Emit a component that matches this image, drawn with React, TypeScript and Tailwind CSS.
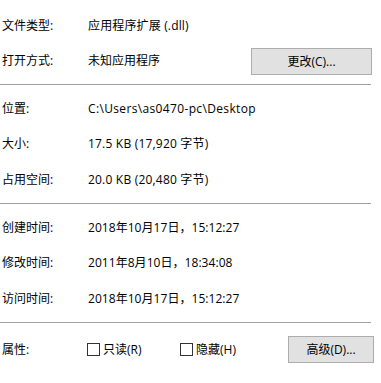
import React from "react";

const font = { fontFamily: '"Open Sans", "Noto Sans CJK SC", sans-serif' };

function Row({ label, children, right, h = "h-[35px]" }: { label: string; children?: React.ReactNode; right?: React.ReactNode; h?: string }) {
  return (
    <div className={`flex ${h} items-center`}>
      <div className="w-[88px] shrink-0 pl-[2px]">{label}</div>
      <div className="flex-1">{children}</div>
      {right}
    </div>
  );
}

function Sep() {
  return (
    <div className="py-[6px]">
      <div className="h-px w-[371px] bg-[#a0a0a0]" />
    </div>
  );
}

function Btn({ children, w }: { children: React.ReactNode; w: string }) {
  return (
    <div className={`${w} flex h-[27px] items-center justify-center border border-[#adadad] bg-[#e1e1e1]`}>
      {children}
    </div>
  );
}

function Check({ label }: { label: string }) {
  return (
    <div className="flex items-center">
      <div className="h-[13px] w-[13px] border border-[#333333] bg-white" />
      <span className="ml-[3px]">{label}</span>
    </div>
  );
}

export default function App() {
  return (
    <div className="h-[383px] w-[381px] bg-white pt-[8px] text-[12px] leading-none text-black" style={font}>
      <Row label="文件类型:"><span className="tracking-[0.15px]">应用程序扩展 (.dll)</span></Row>
      <Row label="打开方式:" right={<div className="mr-[9px] mt-[2px]"><Btn w="w-[121px]">更改(C)...</Btn></div>}>未知应用程序</Row>
      <Sep />
      <Row label="位置:"><span className="tracking-[0.35px]">C:\Users\as0470-pc\Desktop</span></Row>
      <Row label="大小:" h="h-[36px]"><span className="tracking-[0.2px]">17.5 KB (17,920 字节)</span></Row>
      <Row label="占用空间:"><span className="tracking-[0.2px]">20.0 KB (20,480 字节)</span></Row>
      <Sep />
      <Row label="创建时间:"><span className="tracking-[0.05px]">2018年10月17日，15:12:27</span></Row>
      <Row label="修改时间:" h="h-[36px]"><span className="tracking-[0.05px]">2011年8月10日，18:34:08</span></Row>
      <Row label="访问时间:"><span className="tracking-[0.05px]">2018年10月17日，15:12:27</span></Row>
      <Sep />
      <div className="flex h-[41px] items-center">
        <div className="w-[87px] shrink-0 pl-[2px]">属性:</div>
        <div className="w-[93px]"><Check label="只读(R)" /></div>
        <div className="flex-1"><Check label="隐藏(H)" /></div>
        <div className="mr-[7px]"><Btn w="w-[86px]">高级(D)...</Btn></div>
      </div>
    </div>
  );
}
